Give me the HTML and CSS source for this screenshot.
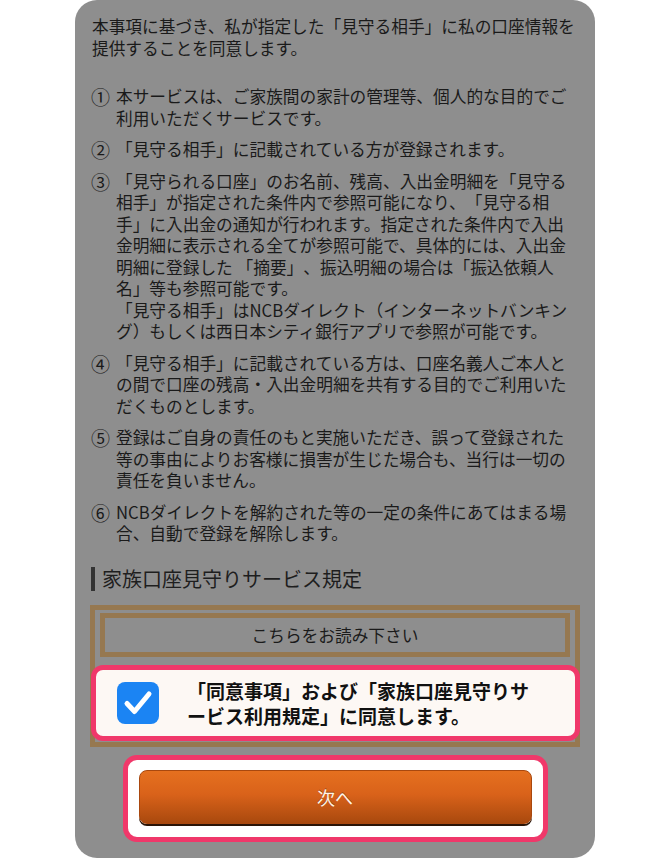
FILE: index.html
```html
<!DOCTYPE html>
<html lang="ja">
<head>
<meta charset="UTF-8">
<meta name="viewport" content="width=device-width, initial-scale=1.0">
<title>家族口座見守りサービス</title>
<link rel="stylesheet" href="styles.css">
</head>
<body>

<div class="panel">
  <p class="intro">本事項に基づき、私が指定した「見守る相手」に私の口座情報を<br>提供することを同意します。</p>

  <ol class="terms">
    <li><span class="num">①</span><span class="body">本サービスは、ご家族間の家計の管理等、個人的な目的でご<br>利用いただくサービスです。</span></li>
    <li><span class="num">②</span><span class="body">「見守る相手」に記載されている方が登録されます。</span></li>
    <li><span class="num">③</span><span class="body">「見守られる口座」のお名前、残高、入出金明細を「見守る<br>相手」が指定された条件内で参照可能になり、「見守る相<br>手」に入出金の通知が行われます。指定された条件内で入出<br>金明細に表示される全てが参照可能で、具体的には、入出金<br>明細に登録した 「摘要」、振込明細の場合は「振込依頼人<br>名」等も参照可能です。<br>「見守る相手」はNCBダイレクト（インターネットバンキン<br>グ）もしくは西日本シティ銀行アプリで参照が可能です。</span></li>
    <li><span class="num">④</span><span class="body">「見守る相手」に記載されている方は、口座名義人ご本人と<br>の間で口座の残高・入出金明細を共有する目的でご利用いた<br>だくものとします。</span></li>
    <li><span class="num">⑤</span><span class="body">登録はご自身の責任のもと実施いただき、誤って登録された<br>等の事由によりお客様に損害が生じた場合も、当行は一切の<br>責任を負いません。</span></li>
    <li><span class="num">⑥</span><span class="body">NCBダイレクトを解約された等の一定の条件にあてはまる場<br>合、自動で登録を解除します。</span></li>
  </ol>

  <h2 class="section-title">家族口座見守りサービス規定</h2>

  <div class="agree-box">
    <button class="read-button">こちらをお読み下さい</button>
    <label class="check-row">
      <span class="checkbox">
        <svg width="42" height="42" viewBox="0 0 42 42">
          <path d="M10 21.5 L17.5 29.5 L32 12" fill="none" stroke="#fff" stroke-width="5" stroke-linecap="round" stroke-linejoin="round"/>
        </svg>
      </span>
      <span class="check-text">「同意事項」および「家族口座見守りサ<br>ービス利用規定」に同意します。</span>
    </label>
  </div>

  <div class="next-wrap">
    <button class="next-button">次へ</button>
  </div>
</div>

</body>
</html>
```

FILE: styles.css
```css
body {
  margin: 0;
  background-color: #fff;
  font-family: "Noto Sans CJK JP", "Noto Sans", sans-serif;
  color: #1a1a1a;
  text-spacing-trim: space-all;
}

.panel {
  width: 520px;
  margin: 0 auto;
  padding: 16px 15px 16px;
  box-sizing: border-box;
  background-color: #8e8e8e;
  border-radius: 22px;
}

.intro {
  margin: 0;
  padding-left: 2px;
  font-size: 16.7px;
  line-height: 21.5px;
  white-space: nowrap;
}

.terms {
  margin: 27px 0 0;
  padding: 0 0 0 2px;
  list-style: none;
}

.terms li {
  display: flex;
  font-size: 16.7px;
  line-height: 21.5px;
  white-space: nowrap;
}

.terms li + li {
  margin-top: 10px;
}

.num {
  flex: none;
  width: 25px;
  margin-left: -1px;
  font-size: 19px;
}

.section-title {
  margin: 22.5px 0 0 1px;
  padding-left: 7px;
  border-left: 4px solid #333;
  font-size: 20px;
  font-weight: normal;
  line-height: 24px;
  color: #1e1e1e;
}

.agree-box {
  margin-top: 14px;
  padding: 3px 5px 1px;
  border: 5px solid #967850;
}

.read-button {
  display: block;
  width: 100%;
  height: 44px;
  padding: 0;
  border: 5px solid #967850;
  background-color: #8e8e8e;
  font-family: inherit;
  font-size: 16.7px;
  color: #1a1a1a;
}

.check-row {
  display: flex;
  align-items: center;
  margin: 8px -10px 0 -9px;
  padding: 8px 0 8px 21px;
  border: 5px solid #f0386a;
  border-radius: 12px;
  background-color: #fdf8f4;
}

.checkbox {
  flex: none;
  width: 42px;
  height: 42px;
  margin-right: 28px;
  border-radius: 8px;
  background-color: #1b84f3;
}

.checkbox svg {
  display: block;
}

.check-text {
  font-size: 19px;
  font-weight: bold;
  line-height: 25px;
  color: #111;
  white-space: nowrap;
}

.next-wrap {
  width: 425px;
  margin: 8px auto 0;
  padding: 10px 11px 13px;
  box-sizing: border-box;
  border: 5px solid #f0386a;
  border-radius: 14px;
  background-color: #fff;
}

.next-button {
  display: block;
  width: 100%;
  height: 54px;
  border: 1px solid #a9480e;
  border-radius: 8px;
  background: linear-gradient(#e5701f, #d9621a 45%, #a9490e);
  box-shadow: 0 2px 0 #2b1406;
  font-family: inherit;
  font-size: 18px;
  color: #fff4e6;
  text-shadow: 0 -1px 0 rgba(0, 0, 0, 0.35);
  cursor: pointer;
}
```
